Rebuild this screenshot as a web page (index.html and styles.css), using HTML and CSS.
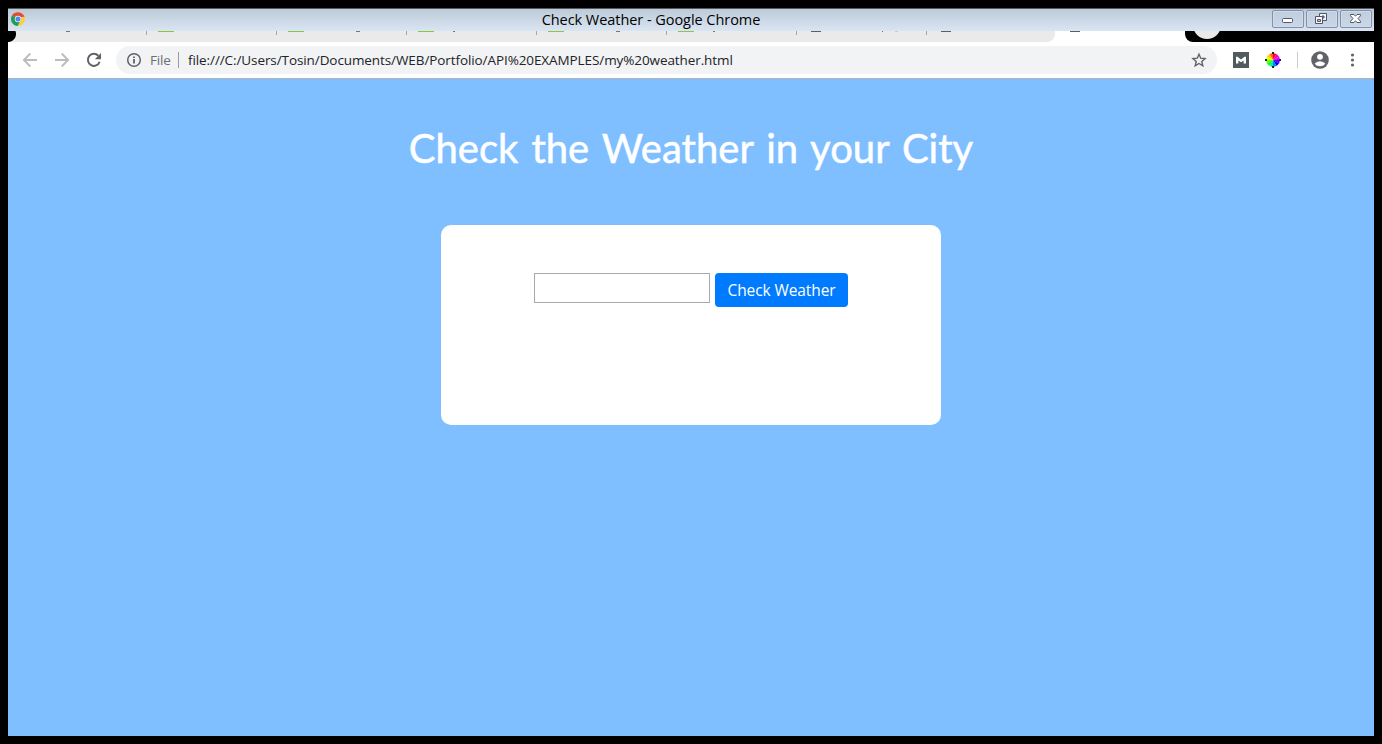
FILE: index.html
```html
<!DOCTYPE html>
<html lang="en">
<head>
<meta charset="utf-8">
<title>Check Weather</title>
<link rel="stylesheet" href="styles.css">
</head>
<body>
<div class="window">
  <header class="titlebar">
    <svg class="chrome-logo" width="14" height="14" viewBox="0 0 14 14">
      <circle cx="7" cy="7" r="7" fill="#fbcf43"/>
      <path d="M7 7 .94 3.5A7 7 0 0 1 13.06 3.8z" fill="#dd4c3f"/>
      <path d="M7 7 .94 3.5A7 7 0 0 0 6.6 14L9.6 8.6z" fill="#1b9f5b"/>
      <path d="M7 3.8h6.1l.5 1H7z" fill="#dd4c3f"/>
      <circle cx="7" cy="7" r="3.2" fill="#f2f5f5"/>
      <circle cx="7" cy="7" r="2.5" fill="#4a8af4"/>
    </svg>
    <span class="window-title">Check Weather - Google Chrome</span>
    <div class="controls">
      <span class="control"><svg width="30" height="16" viewBox="0 0 30 16"><rect x="9.5" y="7.5" width="10" height="4" rx="1" fill="#fff" stroke="#535666"/></svg></span>
      <span class="control"><svg width="30" height="16" viewBox="0 0 30 16"><path d="M12.5 2.5h7v7h-7z" fill="#f4f5f8" stroke="#535666"/><path d="M15 5h2v2h-2z" fill="#9aa9bf" stroke="#535666"/><path d="M8.500 5.500h7v7h-7z" fill="#f4f5f8" stroke="#535666"/><path d="M10.500 8.500h3v2h-3z" fill="#b9c8db" stroke="#535666"/></svg></span>
      <span class="control"><svg width="30" height="16" viewBox="0 0 30 16"><path d="M9.500 3.500h3.500l1.500 1.700 1.500-1.700h3.500v1.200L17 7.500l2.500 2.800v1.200H16l-1.500-1.700-1.500 1.700H9.500v-1.200L12 7.500 9.500 4.700z" fill="#fff" stroke="#535666"/></svg></span>
    </div>
  </header>
  <div class="tabstrip">
    <div class="tab tab-first"><i class="tail tail-g"></i></div>
    <div class="tab"><i class="fav"></i></div>
    <div class="tab"><i class="fav"></i><i class="tail tail-g"></i></div>
    <div class="tab"><i class="fav"></i><i class="tail tail-y"></i></div>
    <div class="tab"><i class="fav"></i><i class="tail tail-g"></i></div>
    <div class="tab"><i class="fav"></i><i class="tail tail-y"></i></div>
    <div class="tab"><i class="page"></i><i class="tail tail-comma"></i><i class="tail tail-light"></i></div>
    <div class="tab tab-last"><i class="page"></i></div>
    <div class="tab-active"><i class="page"></i></div>
    <div class="strip-end"><i class="new-tab"></i></div>
  </div>
  <nav class="toolbar">
    <svg class="nav-icon" width="16" height="16" viewBox="0 0 16 16" fill="none" stroke="#babcbe" stroke-width="1.9"><path d="M15 8H2M8.300 1.500 1.900 8l6.400 6.500"/></svg>
    <svg class="nav-icon" width="16" height="16" viewBox="0 0 16 16" fill="none" stroke="#babcbe" stroke-width="1.900"><path d="M1 8h13M7.700 1.500 14.100 8l-6.400 6.500"/></svg>
    <svg class="nav-icon" width="16" height="16" viewBox="0 0 16 16"><path d="M13.600 9.700A6 6 0 1 1 12.300 3.800" fill="none" stroke="#5f6368" stroke-width="2"/><path d="M15 1v6.200H8.800z" fill="#5f6368"/></svg>
    <div class="omnibox">
      <svg width="16" height="16" viewBox="0 0 16 16"><circle cx="8" cy="8" r="6.300" fill="none" stroke="#5f6368" stroke-width="1.500"/><path d="M7.100 7h1.800v4.500H7.100zM7.100 4.400h1.800v1.700H7.100z" fill="#5f6368"/></svg>
      <span class="scheme">File</span>
      <span class="divider"></span>
      <span class="url">file:///C:/Users/Tosin/Documents/WEB/Portfolio/API%20EXAMPLES/my%20weather.html</span>
      <svg class="star" width="16" height="16" viewBox="0 0 16 16"><path d="m8 2.200 1.700 4 4.400.4-3.300 2.900 1 4.300L8 11.500l-3.800 2.300 1-4.300-3.300-2.900 4.400-.4z" fill="none" stroke="#5f6368" stroke-width="1.400"/></svg>
    </div>
    <svg class="ext-m" width="16" height="16" viewBox="0 0 16 16"><path d="M0 0h16v16H0z" fill="#515a5c"/><path d="M3 11.500V4.800h1.500L8 7.400l3.500-2.600H13v6.700h-2.400V8.400L8 10.300 5.400 8.400v3.100z" fill="#fff"/></svg>
    <svg class="ext-wheel" width="16" height="16" viewBox="0 0 16 16">
      <path d="M8 8V1l3.500.9z" fill="#f03"/><path d="M8 8l3.500-6.100 2.600 2.600z" fill="#f0a"/><path d="M8 8l6.100-3.500L15 8z" fill="#d0f"/>
      <path d="M8 8h7l-.9 3.500z" fill="#50f"/><path d="M8 8l6.100 3.500-2.600 2.600z" fill="#00f"/><path d="M8 8l3.500 6.100L8 15z" fill="#08e"/>
      <path d="M8 8v7l-3.500-.9z" fill="#0e9"/><path d="M8 8l-3.500 6.100-2.600-2.600z" fill="#0f3"/><path d="M8 8l-6.100 3.500L1 8z" fill="#6f0"/>
      <path d="M8 8H1l.9-3.500z" fill="#df0"/><path d="M8 8 1.900 4.500l2.600-2.600z" fill="#fc0"/><path d="M8 8 4.500 1.900 8 1z" fill="#f60"/>
      <path d="M7 0h2v2H7zM7 14h2v2H7zM0 7h2v2H0zM14 7h2v2h-2z" fill="#222"/>
    </svg>
    <span class="divider divider-light"></span>
    <svg class="avatar" width="18" height="18" viewBox="0 0 18 18"><circle cx="9" cy="9" r="8.800" fill="#5f6368"/><circle cx="9" cy="5.800" r="2.900" fill="#fff"/><path d="M3.600 12.800Q5.500 10.300 9 10.300t5.400 2.500Q12.500 15.300 9 15.300t-5.400-2.500z" fill="#fff"/></svg>
    <svg class="menu" width="5" height="14" viewBox="0 0 5 14" fill="#5f6368"><circle cx="2.500" cy="2" r="1.600"/><circle cx="2.500" cy="7" r="1.600"/><circle cx="2.500" cy="12" r="1.600"/></svg>
  </nav>
  <main class="page-body">
    <h1 class="heading">Check the Weather in your City</h1>
    <section class="card">
      <input class="city" type="text" aria-label="City">
      <button class="submit" type="button">Check Weather</button>
    </section>
  </main>
</div>
</body>
</html>
```
FILE: styles.css
```css
* { box-sizing: border-box; }
body {
  margin: 0;
  height: 744px;
  padding: 8px;
  background: #000;
  overflow: hidden;
  font-family: "Open Sans", "Noto Sans", sans-serif;
}
.window { display: flex; flex-direction: column; height: 728px; }
svg { display: block; flex: none; }

.titlebar {
  display: grid;
  grid-template-columns: 102px 1fr 102px;
  height: 23px;
  flex: none;
  border-top: 1px solid #55595c;
  background: linear-gradient(#bdcad7, #d9e5f3);
}
.chrome-logo { margin: 3px 0 0 3px; }
.window-title {
  justify-self: center;
  margin-right: 80px;
  font-size: 14.5px;
  line-height: 21px;
  letter-spacing: -0.05px;
  white-space: nowrap;
  color: #000;
}
.controls { display: flex; gap: 2px; padding-top: 1px; }
.control {
  width: 32px;
  height: 18px;
  border: 1px solid #8290ae;
  border-radius: 2px;
  background: linear-gradient(#c0cddd, #c9d7e7);
  box-shadow: inset 0 0 0 1px #cfdbe8;
}

.tabstrip { display: flex; height: 11px; flex: none; background: #fff; }
.tab {
  display: flex;
  width: 130px;
  height: 11px;
  background: #eaeaea;
}
.tab::after {
  content: "";
  width: 1px;
  height: 4px;
  margin-left: auto;
  background: #a5a7a9;
}
.tab-first {
  width: 139px;
  background: radial-gradient(circle at 0 3px, #000 7.5px, #eaeaea 8.5px);
}
.tab-last { width: 128px; border-bottom-right-radius: 8px; }
.tab-last::after { display: none; }
.tab-active { display: flex; width: 130px; }
.fav { width: 16px; height: 1px; margin-left: 11px; background: #8cc34b; }
.page { width: 10px; height: 1px; margin-left: 14px; background: #5a5e68; }
.tab-active .page { margin-left: 15px; }
.tail { width: 4px; height: 1px; background: #777; }
.tail-g { margin-left: 52px; }
.tab-first .tail-g { margin-left: 58px; }
.tail-y { width: 2px; margin-left: 19px; }
.tail-comma { width: 1px; margin-left: 61px; background: #a06068; }
.tail-light { width: 3px; margin-left: 12px; background: #ccc; }
.strip-end {
  flex: 1;
  height: 11px;
  padding-left: 8px;
  border-bottom-left-radius: 8px;
  background: #000;
  overflow: hidden;
}
.new-tab {
  display: block;
  width: 28px;
  height: 28px;
  margin-top: -20px;
  border-radius: 50%;
  background: #eaeaea;
}

.toolbar {
  display: flex;
  align-items: center;
  height: 37px;
  flex: none;
  padding-left: 14px;
  border-bottom: 1px solid #b1b3b5;
  background: #fff;
}
.nav-icon { margin-right: 16px; }
.nav-icon + .nav-icon + .nav-icon { margin-right: 14px; }
.omnibox {
  display: flex;
  align-items: center;
  width: 1101px;
  height: 28px;
  padding: 0 10px;
  border-radius: 14px;
  background: #f1f3f4;
  font-size: 13.5px;
  line-height: 28px;
}
.scheme { width: 28px; margin-left: 8px; color: #6b6f74; letter-spacing: -0.2px; }
.divider { width: 1px; height: 16px; background: #9a9ca0; }
.url { margin-left: 9px; color: #222426; letter-spacing: -0.09px; white-space: nowrap; }
.star { margin-left: auto; }
.ext-m { margin-left: 16px; }
.ext-wheel { margin-left: 16px; }
.divider-light { margin-left: 16px; background: #c8cacc; }
.avatar { margin-left: 13px; }
.menu { margin-left: 21px; }

.page-body {
  display: flex;
  flex-direction: column;
  align-items: center;
  flex: 1;
  background: #80bfff;
}
.heading {
  margin: 45px 0 0;
  height: 48px;
  font-family: Lato, sans-serif;
  font-weight: 400;
  font-size: 40px;
  line-height: 48px;
  letter-spacing: 0;
  word-spacing: 2.8px;
  white-space: nowrap;
  color: #fff;
  -webkit-text-stroke: 0.5px #fff;
}
.card {
  display: flex;
  justify-content: center;
  align-items: flex-start;
  gap: 5px;
  width: 500px;
  height: 200px;
  margin-top: 53px;
  padding-top: 48px;
  border-radius: 10px;
  background: #fff;
}
.city {
  width: 176px;
  height: 30px;
  border: 1px solid #a9a9a9;
  border-radius: 0;
  background: #fff;
}
.submit {
  width: 133px;
  height: 34px;
  padding: 0;
  border: 0;
  border-radius: 4px;
  background: #007bff;
  color: #fff;
  font: 15.5px/34px "Open Sans", sans-serif;
  letter-spacing: -0.1px;
}
```
